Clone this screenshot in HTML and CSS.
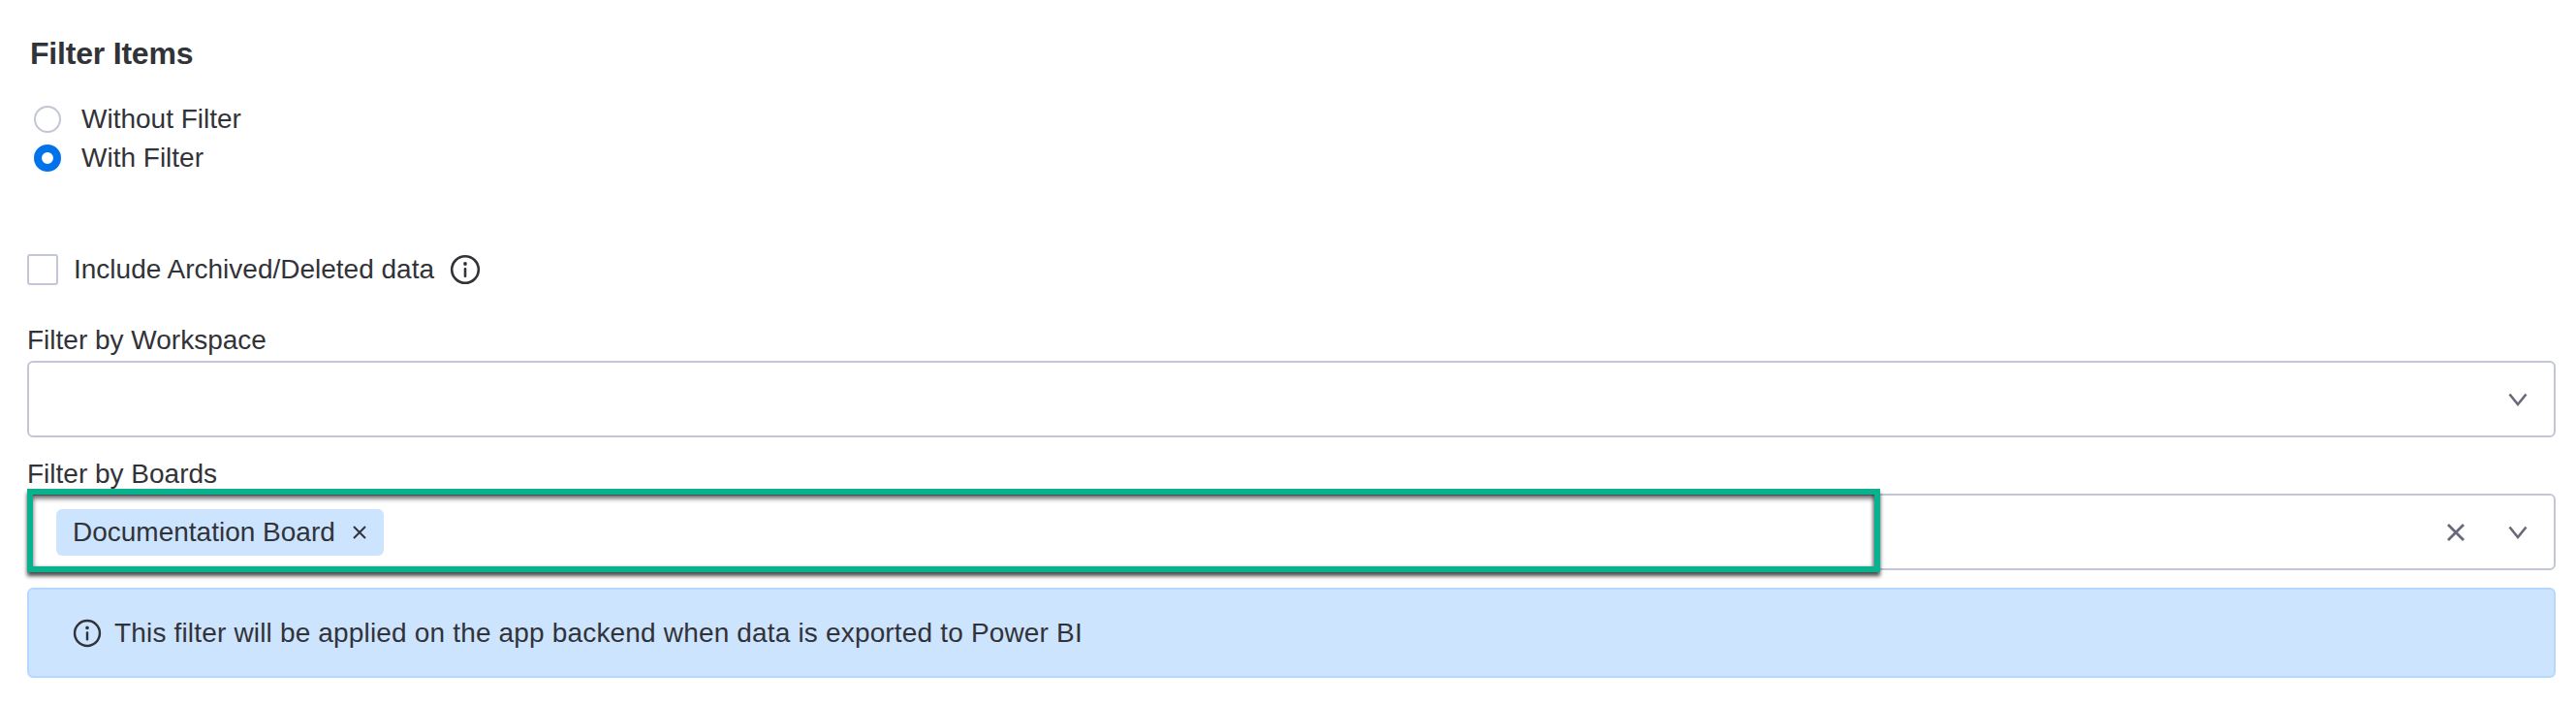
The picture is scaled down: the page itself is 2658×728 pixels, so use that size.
FILE: index.html
```html
<!DOCTYPE html>
<html lang="en">
<head>
<meta charset="utf-8">
<title>Filter Items</title>
<link rel="stylesheet" href="styles.css">
</head>
<body>
<main class="panel">
  <h2 class="title">Filter Items</h2>
  <div class="radios">
    <div class="radio-row"><span class="radio"></span><span>Without Filter</span></div>
    <div class="radio-row"><span class="radio radio-on"></span><span>With Filter</span></div>
  </div>
  <div class="check-row">
    <span class="checkbox"></span>
    <span>Include Archived/Deleted data</span>
    <svg class="info" viewBox="0 0 32 32"><circle cx="16" cy="16" r="13.8" fill="none" stroke="#323338" stroke-width="2.6"/><circle cx="16" cy="10" r="1.9" fill="#323338"/><rect x="14.7" y="14" width="2.6" height="10" rx="1" fill="#323338"/></svg>
  </div>
  <label class="field-label label-first">Filter by Workspace</label>
  <div class="select">
    <span class="select-value"></span>
    <svg class="chev" viewBox="0 0 20 20"><path d="M1.5 4.5 L10 15 L18.5 4.5" fill="none" stroke="#676879" stroke-width="2.6"/></svg>
  </div>
  <label class="field-label label-second">Filter by Boards</label>
  <div class="select select-boards">
    <span class="select-value">
      <span class="tag">Documentation Board
        <svg class="tag-x" viewBox="0 0 16 16"><path d="M2 2 L14 14 M14 2 L2 14" fill="none" stroke="#323338" stroke-width="2"/></svg>
      </span>
    </span>
    <svg class="clear" viewBox="0 0 20 20"><path d="M2 2 L18 18 M18 2 L2 18" fill="none" stroke="#676879" stroke-width="2.8"/></svg>
    <svg class="chev" viewBox="0 0 20 20"><path d="M1.5 4.5 L10 15 L18.5 4.5" fill="none" stroke="#676879" stroke-width="2.6"/></svg>
    <div class="highlight"></div>
  </div>
  <div class="alert">
    <svg class="alert-info" viewBox="0 0 32 32"><circle cx="16" cy="16" r="13.8" fill="none" stroke="#323338" stroke-width="2.6"/><circle cx="16" cy="10" r="1.9" fill="#323338"/><rect x="14.7" y="14" width="2.6" height="10" rx="1" fill="#323338"/></svg>
    <span class="alert-text">This filter will be applied on the app backend when data is exported to Power BI</span>
  </div>
</main>
</body>
</html>
```

FILE: styles.css
```css
* { box-sizing: border-box; }
html, body { margin: 0; background: #fff; }
body {
  font-family: "Liberation Sans", Arial, sans-serif;
  font-size: 28px;
  color: #323338;
  height: 728px;
  overflow: hidden;
}
.panel { padding: 37px 21px 0 28px; }
.title { margin: 0 0 0 3px; font-size: 32px; font-weight: 700; line-height: 36px; letter-spacing: -0.2px; }
.radios { margin: 36px 0 0 7px; display: flex; flex-direction: column; gap: 12px; }
.radio-row { display: flex; align-items: center; gap: 21px; height: 28px; line-height: 28px; }
.radio { width: 28px; height: 28px; border-radius: 50%; border: 2px solid #c3c6d4; background: #fff; flex: none; }
.radio-on { border: 8px solid #0073ea; }
.check-row { display: flex; align-items: center; margin-top: 85px; height: 32px; }
.checkbox { width: 32px; height: 32px; border: 2px solid #c3c6d4; border-radius: 3px; margin-right: 16px; flex: none; }
.info { width: 32px; height: 32px; margin-left: 16px; }
.field-label { display: block; line-height: 32px; font-weight: 400; }
.label-first { margin-top: 41px; }
.label-second { margin-top: 22px; }
.select {
  position: relative;
  display: flex;
  align-items: center;
  height: 79px;
  margin-top: 5px;
  padding: 0 27px 0 28px;
  border: 2px solid #c3c6d4;
  border-radius: 6px;
}
.select-boards { margin-top: 4px; }
.select-value { flex: 1; display: flex; align-items: center; }
.chev { width: 20px; height: 20px; flex: none; }
.clear { width: 20px; height: 20px; flex: none; margin-right: 44px; }
.tag {
  display: flex;
  align-items: center;
  height: 48px;
  padding: 0 17px;
  background: #cde4ff;
  border-radius: 6px;
  white-space: nowrap;
}
.tag-x { width: 16px; height: 16px; margin-left: 17px; }
.highlight {
  position: absolute;
  left: -2px;
  top: -7px;
  width: 1912px;
  height: 86px;
  border: 6px solid #0ab18e;
  box-shadow: 0 4px 4px rgba(0,0,0,.7), inset 0 4px 5px rgba(0,0,0,.6), inset -2px 0 3px rgba(0,0,0,.25);
}
.alert {
  display: flex;
  align-items: center;
  height: 93px;
  margin-top: 18px;
  padding-left: 45px;
  background: #cde4ff;
  border: 2px solid #b4d8ff;
  border-radius: 6px;
}
.alert-info { width: 30px; height: 30px; margin-right: 13px; flex: none; }
.alert-text { letter-spacing: 0.17px; }
```
